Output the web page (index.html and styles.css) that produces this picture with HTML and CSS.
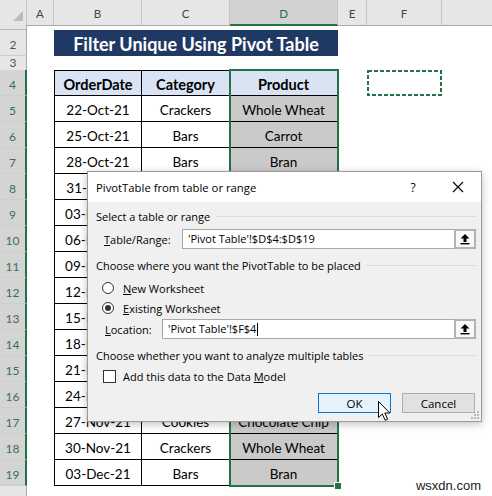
FILE: index.html
```html
<!DOCTYPE html>
<html>
<head>
<meta charset="utf-8">
<link rel="stylesheet" href="styles.css">
</head>
<body>
<div class="app">
  <div class="sheet">
    <div class="row hdr">
      <div class="corner"><svg width="27" height="25" viewBox="0 0 27 25"><polygon points="23,11 23,21 13,21" fill="#bcbcbc"/></svg></div>
      <div class="ch">A</div><div class="ch">B</div><div class="ch">C</div><div class="ch sel">D</div><div class="ch">E</div><div class="ch">F</div><div class="ch last"></div>
    </div>
    <div class="row r1"><div class="rh"></div><div class="span"></div></div>
    <div class="row"><div class="rh">2</div><div></div><div class="title">Filter Unique Using Pivot Table</div><div></div><div></div><div></div></div>
    <div class="row r3"><div class="rh">3</div><div class="span"></div></div>
    <div class="row"><div class="rh sel">4</div><div></div><div class="c th first">OrderDate</div><div class="c th">Category</div><div class="c th">Product</div><div></div><div class="f4"><svg width="75" height="26" viewBox="0 0 75 26"><rect x="1" y="1" width="73" height="24" fill="none" stroke="#217346" stroke-width="2" stroke-dasharray="4 2"/></svg></div><div></div></div>
    <div class="row"><div class="rh sel">5</div><div></div><div class="c first">22-Oct-21</div><div class="c">Crackers</div><div class="c d">Whole Wheat</div><div></div><div></div><div></div></div>
    <div class="row"><div class="rh sel">6</div><div></div><div class="c first">25-Oct-21</div><div class="c">Bars</div><div class="c d">Carrot</div><div></div><div></div><div></div></div>
    <div class="row"><div class="rh sel">7</div><div></div><div class="c first">28-Oct-21</div><div class="c">Bars</div><div class="c d">Bran</div><div></div><div></div><div></div></div>
    <div class="row"><div class="rh sel">8</div><div></div><div class="c first">31-Oct-21</div><div class="c">Cookies</div><div class="c d">Chocolate Chip</div><div></div><div></div><div></div></div>
    <div class="row"><div class="rh sel">9</div><div></div><div class="c first">03-Nov-21</div><div class="c">Crackers</div><div class="c d">Whole Wheat</div><div></div><div></div><div></div></div>
    <div class="row"><div class="rh sel">10</div><div></div><div class="c first">06-Nov-21</div><div class="c">Bars</div><div class="c d">Carrot</div><div></div><div></div><div></div></div>
    <div class="row"><div class="rh sel">11</div><div></div><div class="c first">09-Nov-21</div><div class="c">Bars</div><div class="c d">Bran</div><div></div><div></div><div></div></div>
    <div class="row"><div class="rh sel">12</div><div></div><div class="c first">12-Nov-21</div><div class="c">Crackers</div><div class="c d">Whole Wheat</div><div></div><div></div><div></div></div>
    <div class="row"><div class="rh sel">13</div><div></div><div class="c first">15-Nov-21</div><div class="c">Cookies</div><div class="c d">Chocolate Chip</div><div></div><div></div><div></div></div>
    <div class="row"><div class="rh sel">14</div><div></div><div class="c first">18-Nov-21</div><div class="c">Bars</div><div class="c d">Carrot</div><div></div><div></div><div></div></div>
    <div class="row"><div class="rh sel">15</div><div></div><div class="c first">21-Nov-21</div><div class="c">Crackers</div><div class="c d">Whole Wheat</div><div></div><div></div><div></div></div>
    <div class="row"><div class="rh sel">16</div><div></div><div class="c first">24-Nov-21</div><div class="c">Bars</div><div class="c d">Bran</div><div></div><div></div><div></div></div>
    <div class="row"><div class="rh sel">17</div><div></div><div class="c first">27-Nov-21</div><div class="c">Cookies</div><div class="c d">Chocolate Chip</div><div></div><div></div><div></div></div>
    <div class="row"><div class="rh sel">18</div><div></div><div class="c first">30-Nov-21</div><div class="c">Crackers</div><div class="c d">Whole Wheat</div><div></div><div></div><div></div></div>
    <div class="row"><div class="rh sel">19</div><div></div><div class="c first">03-Dec-21</div><div class="c">Bars</div><div class="c d">Bran</div><div></div><div></div><div></div></div>
    <div class="row r20"><div class="rh"></div><div class="span"></div></div>
  </div>

  <div class="selection"></div>
  <div class="handle"></div>

  <div class="dialog">
    <div class="dlg-title">
      <span class="dlg-caption">PivotTable from table or range</span>
      <span class="dlg-help">?</span>
      <svg class="dlg-close" width="12" height="12" viewBox="0 0 12 12"><path d="M1 1L11 11M11 1L1 11" stroke="#000" stroke-width="1.1"/></svg>
    </div>
    <div class="dlg-body">
      <div class="group">Select a table or range</div>
      <div class="field">
        <span class="lbl lbl-range"><u>T</u>able/Range:</span>
        <div class="input">'Pivot Table'!$D$4:$D$19</div>
        <div class="rbtn"><svg width="12" height="12" viewBox="0 0 12 12"><path d="M6 1L1.5 5.5H4.5V9H7.5V5.5H10.5Z" fill="#000"/><rect x="1.5" y="10" width="9" height="1.4" fill="#000"/></svg></div>
      </div>
      <div class="group">Choose where you want the PivotTable to be placed</div>
      <div class="opt opt1"><span class="radio"></span><span><u>N</u>ew Worksheet</span></div>
      <div class="opt"><span class="radio on"></span><span><u>E</u>xisting Worksheet</span></div>
      <div class="field field-loc">
        <span class="lbl lbl-loc"><u>L</u>ocation:</span>
        <div class="input">'Pivot Table'!$F$4<span class="caret"></span></div>
        <div class="rbtn"><svg width="12" height="12" viewBox="0 0 12 12"><path d="M6 1L1.5 5.5H4.5V9H7.5V5.5H10.5Z" fill="#000"/><rect x="1.5" y="10" width="9" height="1.4" fill="#000"/></svg></div>
      </div>
      <div class="group">Choose whether you want to analyze multiple tables</div>
      <div class="opt chk"><span class="checkbox"></span><span>Add this data to the Data <u>M</u>odel</span></div>
      <div class="actions">
        <div class="btn primary">OK</div>
        <div class="btn">Cancel</div>
      </div>
    </div>
    <svg class="grip" width="9" height="9" viewBox="0 0 9 9"><g fill="#b8b8b8"><rect x="6" y="0" width="2" height="2"/><rect x="3" y="3" width="2" height="2"/><rect x="6" y="3" width="2" height="2"/><rect x="0" y="6" width="2" height="2"/><rect x="3" y="6" width="2" height="2"/><rect x="6" y="6" width="2" height="2"/></g></svg>
  </div>

  <svg class="cursor" width="15" height="22" viewBox="0 0 15 22"><path d="M1.5 1.5V17.5L5.3 13.9L8.2 20.3L10.6 19.2L7.8 13H12.8Z" fill="#fff" stroke="#000" stroke-width="1" stroke-linejoin="round"/></svg>

  <div class="wm">wsxdn.com</div>
</div>
</body>
</html>
```

FILE: styles.css
```css
* { box-sizing: border-box; margin: 0; padding: 0; }
html, body { width: 492px; height: 496px; overflow: hidden; background: #fff; }
body { font-family: Lato, "Liberation Sans", sans-serif; color: #000; }

.app { position: relative; width: 492px; height: 496px; overflow: hidden; }

.sheet { display: flex; flex-direction: column; height: 496px; }
.row {
  display: grid;
  grid-template-columns: 27px 27px 88px 88px 108px 29px 75px 1fr;
  height: 26px;
  flex: none;
}
.row .span { grid-column: 2 / -1; }

/* column header */
.hdr { height: 25px; background: #e6e6e6; }
.corner { border-right: 1px solid #c4c4c4; border-bottom: 1px solid #a9a9a9; }
.corner svg { display: block; }
.ch {
  border-right: 1px solid #c4c4c4;
  border-bottom: 1px solid #a9a9a9;
  display: flex; align-items: center; justify-content: center;
  font-size: 11.5px; color: #444; padding-top: 2px;
}
.ch.last { border-right: none; }
.ch.sel { background: #d2d2d2; color: #217346; border-bottom: 2px solid #217346; }

/* row headers */
.rh {
  background: #e6e6e6;
  border-right: 1px solid #a9a9a9;
  border-bottom: 1px solid #cdcdcd;
  display: flex; align-items: flex-end; justify-content: center;
  font-size: 12px; color: #555; padding-bottom: 3px; line-height: 14px;
}
.rh.sel { background: #d4d4d4; color: #3a7052; border-right: 2px solid #217346; }
.r1 { height: 5px; }
.r1 .rh { border-bottom: 1px solid #b9b9b9; }
.r3 { height: 14px; }
.r3 .rh { padding-bottom: 0; align-items: center; }
.r20 { flex: 1; height: auto; }
.r20 .rh { border-bottom: none; }

.title {
  grid-column: span 3;
  background: #203864;
  color: #fff;
  font-weight: 700;
  font-size: 18px;
  display: flex; align-items: center; justify-content: center;
  padding-top: 1px;
}

/* table cells */
.c {
  border-right: 1px solid #000;
  border-bottom: 1px solid #000;
  display: flex; align-items: center; justify-content: center;
  font-size: 13.5px; padding-top: 2px;
  white-space: nowrap; overflow: hidden;
}
.c.first { border-left: 1px solid #000; }
.c.th { border-top: 1px solid #000; background: #dae3f3; font-weight: 700; font-size: 14.5px; }
.c.d { background: #cacaca; }
.f4 svg { display: block; }

/* selection overlay */
.selection {
  position: absolute; left: 229px; top: 69px; width: 110px; height: 418px;
  border: 2px solid #217346;
}
.handle {
  position: absolute; left: 335px; top: 483px; width: 6px; height: 6px;
  background: #217346; outline: 1px solid #fff;
}

/* dialog */
.dialog {
  position: absolute; left: 87px; top: 171px; width: 395px; height: 251px;
  background: #f0f0f0;
  border: 1px solid #9a9a9a;
  box-shadow: 0 2px 8px rgba(0,0,0,0.25);
  font-family: "Open Sans", "Noto Sans", sans-serif;
  font-size: 11px; color: #000;
  display: flex; flex-direction: column;
}
.dlg-title {
  height: 30px; background: #fff;
  display: flex; align-items: center;
  padding-left: 8px;
  font-size: 11.3px;
}
.dlg-caption { flex: 1; }
.dlg-help { width: 10px; text-align: center; margin-right: 34px; font-size: 12px; }
.dlg-close { margin-right: 17px; display: block; }

.dlg-body { flex: 1; padding: 6px 5px 0 8px; display: flex; flex-direction: column; }
.group { display: flex; align-items: center; height: 16px; gap: 6px; white-space: nowrap; }
.group::after { content: ""; flex: 1; height: 1px; background: #dcdcdc; }

.field { display: flex; align-items: center; height: 20px; margin-top: 5px; padding-left: 8px; }
.lbl { width: 78px; flex: none; }
.lbl-loc { width: 57px; margin-left: 1px; }
.input {
  flex: 1; height: 20px; background: #fff;
  border: 1px solid #a8a8a8; border-right: none;
  padding-left: 5px; line-height: 18px;
  display: flex; align-items: center;
}
.caret { display: inline-block; width: 1px; height: 13px; background: #000; margin-left: 1px; }
.rbtn {
  width: 22px; height: 20px; flex: none;
  border: 2px solid #b3b3b3; background: #f8f8f8;
  display: flex; align-items: center; justify-content: center;
}
.rbtn svg { display: block; }

.group + .field { margin-top: 5px; }
.field + .group { margin-top: 8px; }
.field-loc { margin-top: 1px; }

.opt { display: flex; align-items: center; height: 20px; }
.opt1 { margin-top: 5px; }
.radio {
  width: 12px; height: 12px; border-radius: 50%;
  border: 1px solid #333; background: #fff;
  margin-left: 6px; margin-right: 9px;
  display: flex; align-items: center; justify-content: center;
}
.radio.on::after { content: ""; width: 6px; height: 6px; border-radius: 50%; background: #333; }
.chk { margin-top: 3px; }
.checkbox {
  width: 13px; height: 13px; border: 1px solid #333; background: #fff;
  margin-left: 7px; margin-right: 7px;
}

.actions { display: flex; justify-content: flex-end; gap: 11px; margin-top: 7px; padding-right: 1px; }
.btn {
  width: 73px; height: 20px;
  border: 1px solid #adadad; background: #e1e1e1;
  display: flex; align-items: center; justify-content: center;
  font-size: 11.5px;
}
.btn.primary { border-color: #0078d7; background: #e5f1fb; }

.grip { position: absolute; right: 1px; bottom: 1px; display: block; }

.cursor { position: absolute; left: 377px; top: 400px; display: block; }

.wm {
  position: absolute; right: 11px; top: 478px;
  font-family: "Liberation Sans", Arial, sans-serif;
  font-size: 13px; color: #222; line-height: 16px;
}
```
